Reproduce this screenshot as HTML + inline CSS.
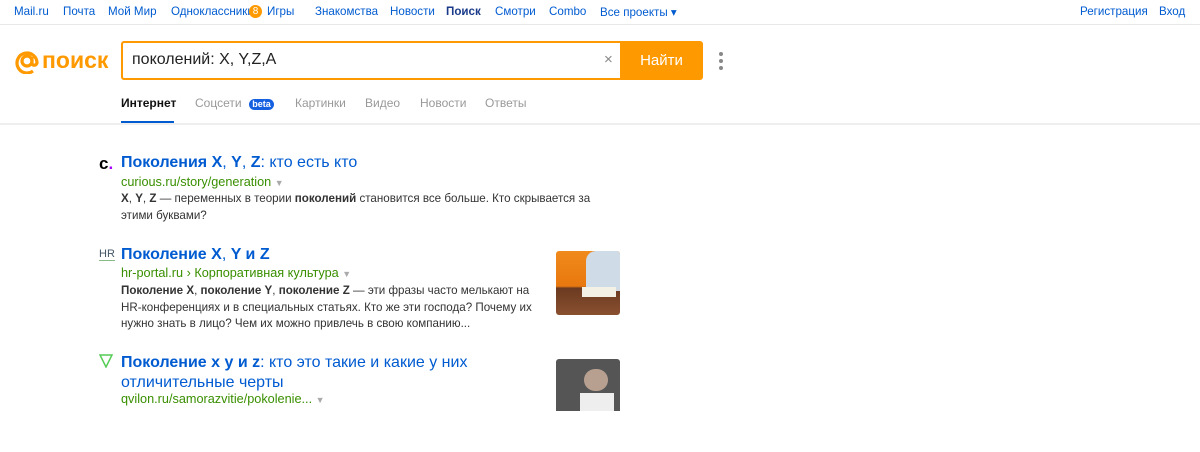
<!DOCTYPE html><html><head><meta charset="utf-8"><style>
body{margin:0;width:1200px;height:452px;overflow:hidden;background:#fff;font-family:"Liberation Sans",Arial,sans-serif;position:relative}
.a{position:absolute;white-space:nowrap}
.top{font-size:11.6px;color:#005bd1;top:5px}
.t{font-size:16px;color:#005bd1}
.t b{font-weight:bold}
.u{font-size:12.7px;color:#398f00}
.s{font-size:11.6px;color:#333;line-height:16.5px}
.tab{font-size:12px;color:#999;top:96px}
</style></head><body>
<div class="a top" style="left:14px">Mail.ru</div>
<div class="a top" style="left:63px">Почта</div>
<div class="a top" style="left:108px">Мой Мир</div>
<div class="a top" style="left:171px">Одноклассники</div>
<div class="a" style="left:249px;top:5px;width:13px;height:13px;border-radius:7px;background:#f90;color:#fff;font-size:10px;text-align:center;line-height:13px">8</div>
<div class="a top" style="left:267px">Игры</div>
<div class="a top" style="left:315px">Знакомства</div>
<div class="a top" style="left:390px">Новости</div>
<div class="a top" style="left:446px;font-weight:bold;color:#1a3a8a">Поиск</div>
<div class="a top" style="left:495px">Смотри</div>
<div class="a top" style="left:549px">Combo</div>
<div class="a top" style="left:600px">Все проекты ▾</div>
<div class="a top" style="left:1080px">Регистрация</div>
<div class="a top" style="left:1159px">Вход</div>
<div class="a" style="left:0;top:24px;width:1200px;height:1px;background:#e8e8e8"></div>
<svg class="a" style="left:14px;top:48px" width="26" height="26" viewBox="0 0 26 26"><circle cx="13" cy="13" r="5" fill="none" stroke="#f90" stroke-width="3.2"/><path d="M18 9v6c0 3 4 3 5 0a10 10 0 1 0-4 8" fill="none" stroke="#f90" stroke-width="3.2"/></svg>
<div class="a" style="left:42px;top:47px;font-size:23px;font-weight:bold;color:#f90">поиск</div>
<div class="a" style="left:121px;top:41px;width:497px;height:35px;border:2px solid #f90;border-right:none;border-radius:3px 0 0 3px"></div>
<div class="a" style="left:132px;top:51px;font-size:16px;color:#222">поколений: X, Y,Z,A</div>
<div class="a" style="left:604px;top:51px;font-size:15px;color:#888">×</div>
<div class="a" style="left:620px;top:41px;width:83px;height:39px;background:#f90;border-radius:0 3px 3px 0;color:#fff;font-size:15px;text-align:center;line-height:39px">Найти</div>
<div class="a" style="left:719px;top:52px;width:4px;height:4px;border-radius:2px;background:#888;box-shadow:0 7px #888,0 14px #888"></div>
<div class="a tab" style="left:121px;color:#111;font-weight:bold">Интернет</div>
<div class="a tab" style="left:195px">Соцсети</div>
<div class="a" style="left:249px;top:99px;width:25px;height:11px;border-radius:6px;background:#1560e0;color:#fff;font-size:9px;font-weight:bold;text-align:center;line-height:11px">beta</div>
<div class="a tab" style="left:295px">Картинки</div>
<div class="a tab" style="left:365px">Видео</div>
<div class="a tab" style="left:420px">Новости</div>
<div class="a tab" style="left:485px">Ответы</div>
<div class="a" style="left:121px;top:121px;width:53px;height:2px;background:#005bd1"></div>
<div class="a" style="left:0;top:123px;width:1200px;height:2px;background:#eee"></div>

<div class="a" style="left:99px;top:154px;font-size:17px;font-weight:bold;color:#000">c<span style="color:#a0f">.</span></div>
<div class="a t" style="left:121px;top:154px"><b>Поколения X</b>, <b>Y</b>, <b>Z</b>: кто есть кто</div>
<div class="a u" style="left:121px;top:175px">curious.ru/story/generation <span style="color:#aaa;font-size:9px">▼</span></div>
<div class="a s" style="left:121px;top:191px">
<b>X</b>, <b>Y</b>, <b>Z</b> — переменных в теории <b>поколений</b> становится все больше. Кто скрывается за<br>этими буквами?</div>

<div class="a" style="left:99px;top:248px;font-size:11px;color:#456;border-bottom:1px solid #8b8">HR</div>
<div class="a t" style="left:121px;top:246px"><b>Поколение X</b>, <b>Y и Z</b></div>
<div class="a u" style="left:121px;top:266px">hr-portal.ru › Корпоративная культура <span style="color:#aaa;font-size:9px">▼</span></div>
<div class="a s" style="left:121px;top:283px"><b>Поколение X</b>, <b>поколение Y</b>, <b>поколение Z</b> — эти фразы часто мелькают на<br>HR-конференциях и в специальных статьях. Кто же эти господа? Почему их<br>нужно знать в лицо? Чем их можно привлечь в свою компанию...</div>
<div class="a" style="left:556px;top:251px;width:64px;height:64px;border-radius:3px;background:linear-gradient(180deg,#f08a1c 0%,#e8780f 55%,#6a3a20 58%,#8a5030 100%);overflow:hidden"><div style="position:absolute;left:30px;top:0;width:34px;height:40px;background:#cfdbe6;border-radius:10px 0 0 0"></div><div style="position:absolute;left:26px;top:36px;width:34px;height:10px;background:#f3f0e6"></div></div>

<svg class="a" style="left:99px;top:354px" width="14" height="14"><path d="M1 1h12L7 13z" fill="none" stroke="#5c5" stroke-width="1.5"/></svg>
<div class="a t" style="left:121px;top:353px;line-height:20px"><b>Поколение x y и z</b>: кто это такие и какие у них<br>отличительные черты</div>
<div class="a u" style="left:121px;top:392px">qvilon.ru/samorazvitie/pokolenie... <span style="color:#aaa;font-size:9px">▼</span></div>
<div class="a" style="left:556px;top:359px;width:64px;height:52px;border-radius:3px 3px 0 0;background:#555;overflow:hidden"><div style="position:absolute;left:28px;top:10px;width:24px;height:22px;border-radius:12px;background:#b8a090"></div><div style="position:absolute;left:24px;top:34px;width:34px;height:20px;background:#eee"></div></div>
</body></html>
